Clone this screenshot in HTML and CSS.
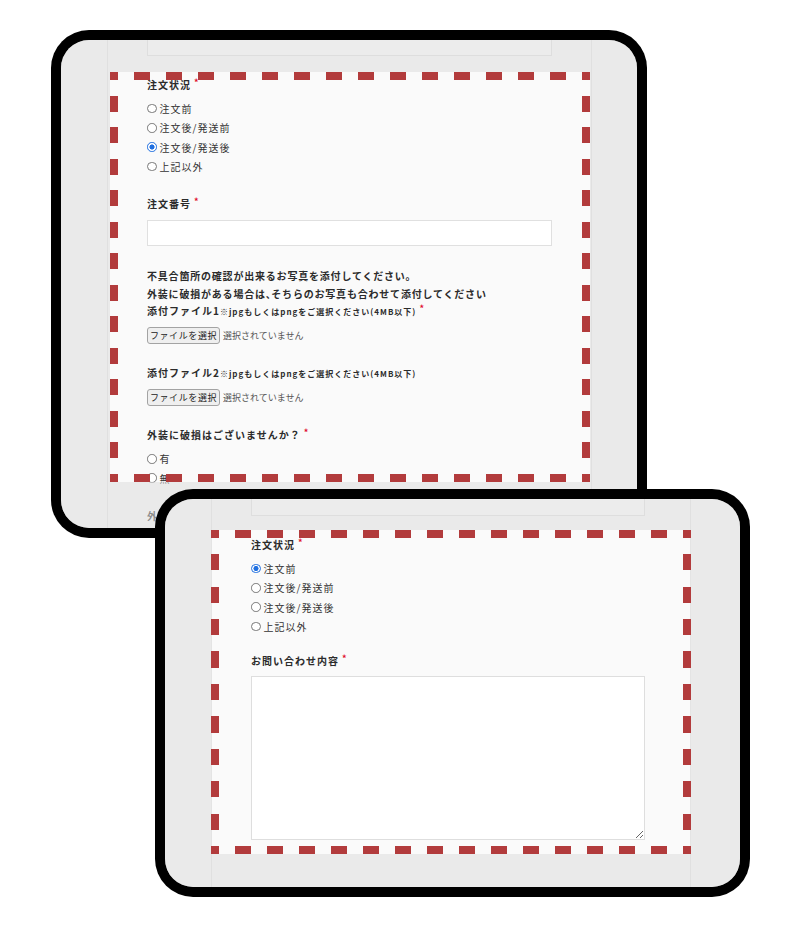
FILE: index.html
```html
<!DOCTYPE html>
<html lang="ja">
<head>
<meta charset="utf-8">
<title>お問い合わせフォーム</title>
<link rel="stylesheet" href="styles.css">
</head>
<body>
<div class="device device-a">
  <div class="screen">
    <form class="column">
      <div class="field"><input class="text-input" type="text"></div>
      <div class="field">
        <p class="label">注文状況<span class="req">*</span></p>
        <div class="radios">
          <label class="radio"><input type="radio" name="s1">注文前</label>
          <label class="radio"><input type="radio" name="s1">注文後/発送前</label>
          <label class="radio"><input type="radio" name="s1" checked>注文後/発送後</label>
          <label class="radio"><input type="radio" name="s1">上記以外</label>
        </div>
      </div>
      <div class="field after-radios">
        <p class="label">注文番号<span class="req">*</span></p>
        <input class="text-input control" type="text">
      </div>
      <div class="field">
        <p class="note">不具合箇所の確認が出来るお写真を添付してください。</p>
        <p class="note">外装に破損がある場合は<span class="punct">、</span>そちらのお写真も合わせて添付してください</p>
        <p class="label">添付ファイル1<span class="small">※jpgもしくはpngをご選択ください(4MB以下)</span><span class="req">*</span></p>
        <div class="file"><span class="file-btn">ファイルを選択</span><span class="file-name">選択されていません</span></div>
      </div>
      <div class="field">
        <p class="label">添付ファイル2<span class="small">※jpgもしくはpngをご選択ください(4MB以下)</span></p>
        <div class="file"><span class="file-btn">ファイルを選択</span><span class="file-name">選択されていません</span></div>
      </div>
      <div class="field">
        <p class="label">外装に破損はございませんか？<span class="req">*</span></p>
        <div class="radios">
          <label class="radio"><input type="radio" name="d1">有</label>
          <label class="radio"><input type="radio" name="d1">無</label>
        </div>
      </div>
      <div class="field after-radios">
        <p class="label">外装の破損箇所<span class="req">*</span></p>
      </div>
    </form>
    <div class="spot spot-a"></div>
  </div>
</div>

<div class="device device-b">
  <div class="screen">
    <form class="column">
      <div class="field"><input class="text-input" type="text"></div>
      <div class="field">
        <p class="label">注文状況<span class="req">*</span></p>
        <div class="radios">
          <label class="radio"><input type="radio" name="s2" checked>注文前</label>
          <label class="radio"><input type="radio" name="s2">注文後/発送前</label>
          <label class="radio"><input type="radio" name="s2">注文後/発送後</label>
          <label class="radio"><input type="radio" name="s2">上記以外</label>
        </div>
      </div>
      <div class="field tight">
        <p class="label">お問い合わせ内容<span class="req">*</span></p>
        <textarea class="textarea control"></textarea>
      </div>
    </form>
    <div class="spot spot-b"></div>
  </div>
</div>
</body>
</html>
```
FILE: styles.css
```css
* { box-sizing: border-box; margin: 0; padding: 0; }

body {
  width: 800px;
  height: 928px;
  position: relative;
  overflow: hidden;
  background: #fff;
  font-family: "Noto Sans CJK JP", "Noto Sans", sans-serif;
  color: #333;
}

.device {
  position: absolute;
  background: #000;
  border-radius: 38px;
  padding: 10px;
}
.device-a { left: 51px; top: 30px; width: 596px; height: 508px; }
.device-b { left: 155px; top: 489px; width: 595px; height: 408px; }

.screen {
  position: relative;
  height: 100%;
  border-radius: 28px;
  overflow: hidden;
  background: #fafafa;
  display: flex;
  padding-left: 46px;
}

.column {
  flex: none;
  border-left: 1px solid #e4e4e4;
  border-right: 1px solid #e4e4e4;
  padding: 0 39px;
}
.device-a .column { width: 485px; margin-top: -10px; }
.device-b .column { width: 480px; margin-top: -9px; }

.field + .field { margin-top: 21px; }
.field.after-radios { margin-top: 20px; }
.field.tight { margin-top: 17px; }

.label {
  font-size: 10px;
  font-weight: 700;
  line-height: 16px;
  letter-spacing: 1px;
  color: #2b2b2b;
  white-space: nowrap;
}
.note {
  font-size: 10px;
  font-weight: 700;
  line-height: 18px;
  letter-spacing: 0.8px;
  color: #2b2b2b;
  white-space: nowrap;
}
.punct { letter-spacing: -5px; margin-right: 0.5px; }
.small {
  font-size: 8px;
  letter-spacing: 1px;
  line-height: 0;
}
.req {
  color: #e0102d;
  font-size: 9px;
  font-weight: 700;
  line-height: 0;
  margin-left: 3px;
  position: relative;
  top: -3px;
}

.text-input {
  display: block;
  width: 405px;
  height: 26px;
  border: 1px solid #e0e0e0;
  background: #fff;
  outline: none;
}
.device-b .text-input { width: 394px; }
.control { margin-top: 8px; }

.textarea {
  display: block;
  width: 394px;
  height: 164px;
  border: 1px solid #dedede;
  background: #fff;
  resize: both;
  outline: none;
  margin-top: 7px;
}

.radios { margin-top: 6px; }
.radio {
  display: flex;
  align-items: center;
  height: 19.3px;
  font-size: 10px;
  letter-spacing: 1px;
  color: #333;
}
.radio input {
  appearance: none;
  -webkit-appearance: none;
  width: 9.5px;
  height: 9.5px;
  border: 1px solid #777;
  border-radius: 50%;
  background: #fff;
  margin-right: 3px;
  flex: none;
}
.radio input:checked {
  border-color: #1f6fe0;
  background: radial-gradient(circle, #1f6fe0 0 2.3px, #fff 2.8px);
}

.file {
  display: flex;
  align-items: center;
  margin-top: 8px;
  height: 17px;
}
.file-btn {
  width: 73px;
  height: 17px;
  border: 1px solid #a3a3a3;
  border-radius: 3px;
  background: #efefef;
  font-size: 9px;
  line-height: 15px;
  letter-spacing: 0.6px;
  text-align: center;
  color: #222;
}
.file-name {
  margin-left: 3px;
  font-size: 9px;
  color: #555;
}

.spot {
  position: absolute;
  pointer-events: none;
  width: 480px;
  --c: #b23b3c;
  box-shadow: 0 0 0 1400px rgba(220, 220, 220, 0.55);
  background:
    repeating-linear-gradient(90deg, var(--c) 0 8px, transparent 8px 24px, var(--c) 24px 32px) left top / 100% 8px no-repeat,
    repeating-linear-gradient(90deg, var(--c) 0 8px, transparent 8px 24px, var(--c) 24px 32px) left bottom / 100% 8px no-repeat,
    repeating-linear-gradient(180deg, var(--c) 0 8px, transparent 8px calc(8px + var(--l)), var(--c) calc(8px + var(--l)) calc(2 * var(--l))) left top / 8px 100% no-repeat,
    repeating-linear-gradient(180deg, var(--c) 0 8px, transparent 8px calc(8px + var(--l)), var(--c) calc(8px + var(--l)) calc(2 * var(--l))) right top / 8px 100% no-repeat;
}
.spot-a { left: 49px; top: 32px; height: 410px; --l: 15.76px; }
.spot-b { left: 46px; top: 31px; height: 324px; --l: 16.21px; }
```
